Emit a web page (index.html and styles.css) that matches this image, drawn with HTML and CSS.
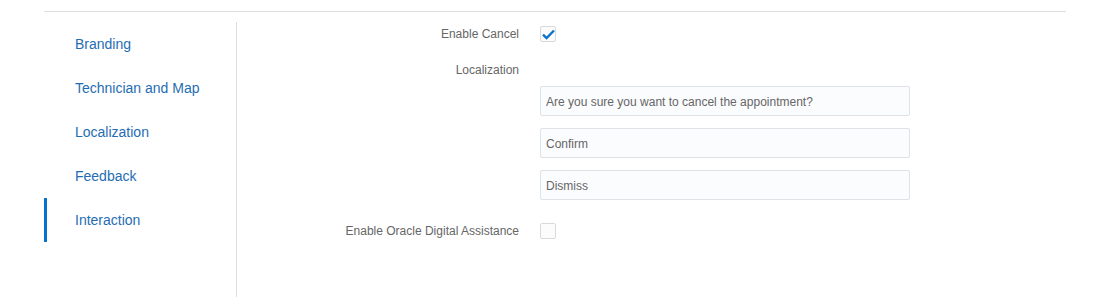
FILE: index.html
```html
<!DOCTYPE html>
<html lang="en">
<head>
  <meta charset="UTF-8">
  <title>Interaction settings</title>
  <link rel="stylesheet" href="styles.css">
</head>
<body>
  <div class="page">
    <div class="divider"></div>
    <div class="layout">
      <nav class="sidebar">
        <a class="nav-item" href="#">Branding</a>
        <a class="nav-item" href="#">Technician and Map</a>
        <a class="nav-item" href="#">Localization</a>
        <a class="nav-item" href="#">Feedback</a>
        <a class="nav-item active" href="#">Interaction</a>
      </nav>

      <div class="content">
        <div class="field">
          <label class="field-label">Enable Cancel</label>
          <span class="checkbox">
            <svg width="13" height="11" viewBox="0 0 13 11"><path d="M1 5.6 L4.6 9 L12 1.5" fill="none" stroke="#0a72c8" stroke-width="2.4"/></svg>
          </span>
        </div>

        <div class="field field-top">
          <label class="field-label">Localization</label>
        </div>
        <div class="inputs">
          <input type="text" placeholder="Are you sure you want to cancel the appointment?">
          <input type="text" placeholder="Confirm">
          <input type="text" placeholder="Dismiss">
        </div>

        <div class="field">
          <label class="field-label">Enable Oracle Digital Assistance</label>
          <span class="checkbox"></span>
        </div>
      </div>
    </div>
  </div>
</body>
</html>
```

FILE: styles.css
```css
* { box-sizing: border-box; }
body {
  margin: 0;
  font-family: 'Liberation Sans', Arial, sans-serif;
  background: #ffffff;
}
.page {
  padding: 11px 35px 0 44px;
}
.divider {
  border-top: 1px solid #dedede;
}
.layout {
  display: flex;
  margin-top: 10px;
}
.sidebar {
  width: 193px;
  min-height: 275px;
  border-right: 1px solid #dedede;
  display: flex;
  flex-direction: column;
}
.nav-item {
  display: block;
  height: 44px;
  line-height: 44px;
  padding-left: 31px;
  font-size: 14px;
  color: #1f6db3;
  text-decoration: none;
}
.nav-item.active {
  border-left: 3px solid #0572ce;
  padding-left: 28px;
}
.content {
  flex: 1;
}
.field {
  display: flex;
  align-items: center;
  height: 24px;
  margin-bottom: 12px;
}
.field-top {
  margin-bottom: 4px;
}
.field-label {
  width: 303px;
  padding-right: 21px;
  text-align: right;
  font-size: 12px;
  color: #666666;
}
.checkbox {
  width: 16px;
  height: 16px;
  border: 1px solid #d9d9d9;
  border-radius: 2px;
  background: #fcfcfc;
  display: flex;
  align-items: center;
  justify-content: center;
}
.inputs {
  margin-left: 303px;
  width: 370px;
  display: flex;
  flex-direction: column;
  gap: 12px;
  margin-bottom: 19px;
}
.inputs input {
  height: 30px;
  padding: 2px 5px 0;
  border: 1px solid #dfe2e6;
  border-radius: 2px;
  background: #fbfcfd;
  font-family: 'Liberation Sans', Arial, sans-serif;
  font-size: 12px;
  color: #666666;
}
.inputs input::placeholder {
  color: #666666;
}
```
